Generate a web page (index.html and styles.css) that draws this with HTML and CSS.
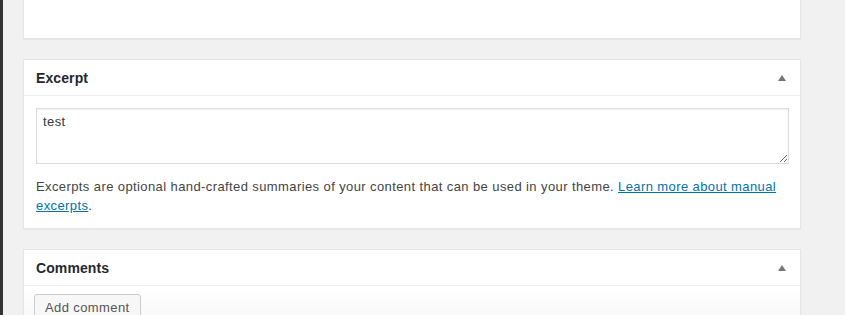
FILE: index.html
```html
<!DOCTYPE html>
<html lang="en">
<head>
  <meta charset="UTF-8">
  <title>Edit Post</title>
  <link rel="stylesheet" href="styles.css">
</head>
<body>
  <div class="edge"></div>
  <div class="wrap">
    <!-- box above, cut off by the viewport -->
    <div class="postbox postbox-cut"></div>

    <!-- Excerpt -->
    <div class="postbox">
      <div class="hndle">
        <span class="title">Excerpt</span>
        <span class="toggle"></span>
      </div>
      <div class="inside">
        <textarea class="excerpt" rows="1">test</textarea>
        <p>Excerpts are optional hand-crafted summaries of your content that can be used in your theme. <a href="#">Learn more about manual excerpts</a>.</p>
      </div>
    </div>

    <!-- Comments -->
    <div class="postbox">
      <div class="hndle">
        <span class="title">Comments</span>
        <span class="toggle"></span>
      </div>
      <div class="inside inside-comments">
        <button class="button">Add comment</button>
      </div>
    </div>
  </div>
</body>
</html>
```

FILE: styles.css
```css
html, body { height:100%; }
body { margin:0; background:#f1f1f1; font-family:"Liberation Sans", Arial, sans-serif; font-size:13px; letter-spacing:.4px; color:#444; display:flex; overflow:hidden; }
.edge { width:3px; flex:none; background:#333; }
.wrap { width:778px; margin-left:20px; display:flex; flex-direction:column; gap:20px; }

.postbox { flex:none; background:#fff; border:1px solid #e5e5e5; box-shadow:0 1px 1px rgba(0,0,0,.04); }
.postbox-cut { height:38px; border-top:0; }

.hndle { display:flex; align-items:center; height:35px; padding:0 12px; border-bottom:1px solid #eee; }
.hndle .title { font-size:14px; font-weight:700; letter-spacing:.1px; color:#23282d; }
.toggle { margin-left:auto; margin-right:2px; width:0; height:0; border-left:4px solid transparent; border-right:4px solid transparent; border-bottom:6px solid #72777c; }

.inside { padding:12px 11px 13px 12px; }
.excerpt { display:block; box-sizing:border-box; width:100%; height:56px; margin:0; padding:4px 6px; border:1px solid #ddd; box-shadow:inset 0 1px 2px rgba(0,0,0,.07); font-family:inherit; font-size:13px; letter-spacing:.4px; line-height:18px; color:#32373c; resize:both; }
.inside p { margin:13px 0 0; line-height:19px; }
.inside a { color:#0073aa; }

.inside-comments { padding:8px 10px 0; background:linear-gradient(#fff, #f7f7f7); }
.button { display:block; height:28px; padding:0 10px; border:1px solid #ccc; border-radius:3px; background:#f7f7f7; box-shadow:0 1px 0 #ccc; font-family:inherit; font-size:13px; letter-spacing:.4px; line-height:26px; color:#555; }
```
